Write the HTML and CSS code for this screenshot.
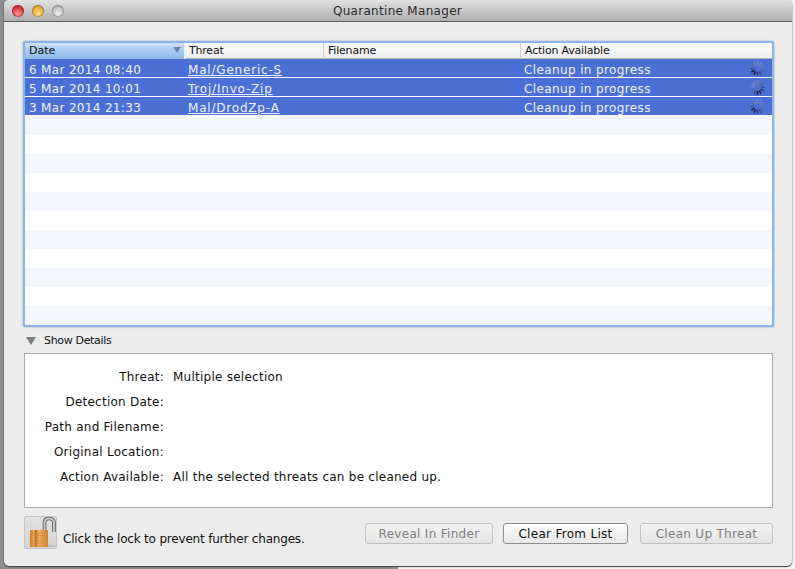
FILE: index.html
```html
<!DOCTYPE html>
<html lang="en">
<head>
<meta charset="utf-8">
<title>Quarantine Manager</title>
<link rel="stylesheet" href="styles.css">
</head>
<body>
<svg class="defs" width="0" height="0" aria-hidden="true">
  <symbol id="spin" viewBox="0 0 20 20">
    <g stroke-width="1.9" stroke-linecap="butt" fill="none">
      <path stroke="#7488cc" d="M10 1.500v4.500"/>
      <path stroke="#6f83c6" d="M14.250 2.640l-2.250 3.900"/>
      <path stroke="#6a7cbe" d="M17.360 5.750l-3.900 2.250"/>
      <path stroke="#5f72b2" d="M18.500 10H14"/>
      <path stroke="#4f62a4" d="M17.360 14.250l-3.900-2.250"/>
      <path stroke="#40528e" d="M14.250 17.360l-2.250-3.900"/>
      <path stroke="#2f3d70" d="M10 18.500V14"/>
      <path stroke="#1b2549" d="M5.750 17.360l2.250-3.900"/>
      <path stroke="#141b38" d="M2.640 14.250l3.900-2.250"/>
      <path stroke="#3f5296" d="M1.500 10H6"/>
      <path stroke="#5568ae" d="M2.640 5.750l3.900 2.250"/>
      <path stroke="#6a7ec0" d="M5.750 2.640l2.250 3.900"/>
    </g>
  </symbol>
</svg>
<main class="window">
  <header class="titlebar">
    <div class="lights">
      <span class="light light-red"></span>
      <span class="light light-amber"></span>
      <span class="light light-grey"></span>
    </div>
    <h1 class="title">Quarantine Manager</h1>
  </header>

  <section class="table">
    <div class="row head">
      <div class="hcell hcell-sorted">Date<span class="sort"></span></div>
      <div class="hcell">Threat</div>
      <div class="hcell">Filename</div>
      <div class="hcell">Action Available</div>
    </div>
    <div class="row selected">
      <div class="cell">6 Mar 2014 08:40</div>
      <div class="cell"><a class="link">Mal/Generic-S</a></div>
      <div class="cell"></div>
      <div class="cell cell-action">Cleanup in progress<svg class="spinner"><use href="#spin"/></svg></div>
    </div>
    <div class="row selected">
      <div class="cell">5 Mar 2014 10:01</div>
      <div class="cell"><a class="link">Troj/Invo-Zip</a></div>
      <div class="cell"></div>
      <div class="cell cell-action">Cleanup in progress<svg class="spinner spinner-b"><use href="#spin"/></svg></div>
    </div>
    <div class="row selected">
      <div class="cell">3 Mar 2014 21:33</div>
      <div class="cell"><a class="link">Mal/DrodZp-A</a></div>
      <div class="cell"></div>
      <div class="cell cell-action">Cleanup in progress<svg class="spinner"><use href="#spin"/></svg></div>
    </div>
    <div class="row alt"></div><div class="row"></div>
    <div class="row alt"></div><div class="row"></div>
    <div class="row alt"></div><div class="row"></div>
    <div class="row alt"></div><div class="row"></div>
    <div class="row alt"></div><div class="row"></div>
    <div class="row alt"></div>
  </section>

  <div class="disclosure">
    <span class="tri"></span>
    <span class="disclosure-label">Show Details</span>
  </div>

  <section class="details">
    <div class="label">Threat:</div><div class="value">Multiple selection</div>
    <div class="label">Detection Date:</div><div class="value"></div>
    <div class="label">Path and Filename:</div><div class="value"></div>
    <div class="label">Original Location:</div><div class="value"></div>
    <div class="label">Action Available:</div><div class="value">All the selected threats can be cleaned up.</div>
  </section>

  <footer class="footer">
    <div class="lockbox">
      <svg class="lock" width="33" height="33" viewBox="0 0 33 33">
        <defs>
          <linearGradient id="brass" x1="0" y1="0" x2="1" y2="0">
            <stop offset="0" stop-color="#c4701f"/>
            <stop offset=".22" stop-color="#f4b45c"/>
            <stop offset=".3" stop-color="#b9691f"/>
            <stop offset=".5" stop-color="#f0b468"/>
            <stop offset="1" stop-color="#c67d30"/>
          </linearGradient>
        </defs>
        <ellipse cx="19" cy="30" rx="13" ry="1.500" fill="#c0c0c0"/>
        <path d="M20.500 15V7C20.500 3.500 22 2.500 25 2.500s5 1 5 4.500V16" fill="none" stroke="#555" stroke-width="3.600"/>
        <path d="M20.500 15V7C20.500 3.500 22 2.500 25 2.500s5 1 5 4.500V16" fill="none" stroke="#c8c8c8" stroke-width="2"/>
        <rect x="6" y="14" width="18" height="17" rx="1" fill="url(#brass)"/>
        <path d="M6 17h18M6 19.500h18M6 22h18M6 24.500h18M6 27h18M6 29.500h18" stroke="#d58a3a" stroke-width=".8"/>
      </svg>
    </div>
    <p class="lock-text">Click the lock to prevent further changes.</p>
    <div class="buttons">
      <button class="btn btn-reveal" disabled>Reveal In Finder</button>
      <button class="btn btn-clear">Clear From List</button>
      <button class="btn btn-clean" disabled>Clean Up Threat</button>
    </div>
  </footer>
</main>
</body>
</html>
```
FILE: styles.css
```css
* { box-sizing: border-box; }

html, body {
  margin: 0;
  height: 100%;
  overflow: hidden;
}

body {
  background: linear-gradient(90deg, #8d8d8d 0 50%, #f4f4f4 50% 100%);
  font-family: "DejaVu Sans", "Liberation Sans", sans-serif;
  font-size: 12px;
  color: #111;
}

.defs { position: absolute; }

.window {
  width: 788px;
  height: 566px;
  margin-left: 4px;
  background: #ececec;
  border-radius: 5px;
  box-shadow: 0 1px 1px #444, 0 0 2px rgba(0, 0, 0, .45);
}

.titlebar {
  position: relative;
  height: 22px;
  padding-top: 1px;
  background: linear-gradient(#e2e2e2, #aeaeae);
  border-bottom: 1px solid #5c5c5c;
  border-radius: 5px 5px 0 0;
  display: flex;
  align-items: center;
  justify-content: center;
}

.lights {
  position: absolute;
  left: 8px;
  top: 5px;
  display: flex;
  gap: 8px;
}

.light {
  width: 12px;
  height: 12px;
  border-radius: 50%;
  box-shadow: inset 0 0 0 1px rgba(0, 0, 0, .25);
}
.light-red { background: radial-gradient(circle at 50% 75%, #ff9a94, #d8343a 60%, #a81a20); }
.light-amber { background: radial-gradient(circle at 50% 75%, #ffe28a, #e8a83a 60%, #b87a18); }
.light-grey { background: radial-gradient(circle at 50% 75%, #f0f0f0, #bcbcbc 65%, #8e8e8e); }

.title {
  margin: 0 0 0 -1px;
  font-size: 12px;
  font-weight: normal;
  color: #2a2a2a;
  letter-spacing: .3px;
}

.table {
  margin: 19px 18px 0 19px;
  height: 286px;
  border: 2px solid #8db4e6;
  border-radius: 2px;
  background: #fff;
  box-shadow: 0 0 2px #7f9fc8;
}

.row {
  display: grid;
  grid-template-columns: 160px 139px 197px 1fr;
  height: 19px;
}

.head {
  height: 16px;
  background: linear-gradient(#fdfdfd, #eeeeee);
  border-bottom: 1px solid #b6b6b6;
  font-size: 11px;
  color: #111;
  letter-spacing: -.2px;
}

.hcell {
  position: relative;
  padding-left: 4px;
  line-height: 16px;
  border-right: 1px solid #cfcfcf;
  white-space: nowrap;
}
.hcell:last-child { border-right: 0; }

.hcell-sorted {
  background: linear-gradient(#cfe2f8, #a6c8f0 50%, #8fbbee);
  border-right: 1px solid #e8f0fa;
  letter-spacing: 0;
}

.sort {
  position: absolute;
  right: 3px;
  top: 4px;
  border-left: 4px solid transparent;
  border-right: 4px solid transparent;
  border-top: 6px solid #6a83ad;
}

.selected {
  background: #4c6fd6;
  color: #eef2fb;
  border-bottom: 1px solid #fff;
  font-size: 12px;
  letter-spacing: .33px;
}

.alt { background: #f3f6fb; }

.cell {
  padding-left: 4px;
  line-height: 23px;
  height: 18px;
  white-space: nowrap;
}

.cell:nth-child(2) { padding-left: 3px; letter-spacing: .8px; }
.cell-action { padding-left: 3px; position: relative; letter-spacing: .38px; }

.link { text-decoration: underline; }

.spinner {
  position: absolute;
  right: 6px;
  top: 1px;
  width: 17px;
  height: 17px;
}
.spinner-b { transform: rotate(-60deg); }

.disclosure {
  height: 26px;
  display: flex;
  align-items: center;
  padding-left: 22px;
  font-size: 11px;
  letter-spacing: -.33px;
  padding-top: 1px;
}

.tri {
  border-left: 5px solid transparent;
  border-right: 5px solid transparent;
  border-top: 8px solid #7d7d7d;
  margin-right: 8px;
}

.details {
  margin: 0 19px 0 20px;
  height: 155px;
  padding-top: 11px;
  background: #fff;
  border: 1px solid #ababab;
  display: grid;
  grid-template-columns: 139px 1fr;
  grid-auto-rows: 25px;
  column-gap: 9px;
  align-items: center;
  line-height: 23px;
  letter-spacing: .25px;
}

.label { text-align: right; white-space: nowrap; }
.value { white-space: nowrap; }

.footer {
  display: flex;
  padding: 8px 19px 0 20px;
}

.lockbox {
  width: 33px;
  height: 33px;
  background: linear-gradient(#e2e2e2, #d4d4d4);
  border: 1px solid #c6c6c6;
  border-radius: 2px;
}

.lock { display: block; margin: -1px; }

.lock-text {
  margin: 14px 0 0 6px;
  line-height: 18px;
  white-space: nowrap;
  font-size: 12px;
  letter-spacing: -.19px;
}

.buttons {
  margin-left: auto;
  margin-top: 7px;
  display: flex;
  gap: 10px;
}

.btn {
  height: 21px;
  padding: 0;
  font: 12px "DejaVu Sans", "Liberation Sans", sans-serif;
  letter-spacing: .3px;
  border-radius: 3px;
  background: linear-gradient(#ffffff, #f0f0f0 50%, #e8e8e8);
  border: 1px solid #8e8e8e;
  color: #111;
}

.btn:disabled {
  background: linear-gradient(#f2f2f2, #e4e4e4);
  border-color: #c0c0c0;
  color: #808080;
}

.btn-reveal { width: 128px; }
.btn-clear { width: 125px; }
.btn-clean { width: 133px; margin-left: 2px; }
```
